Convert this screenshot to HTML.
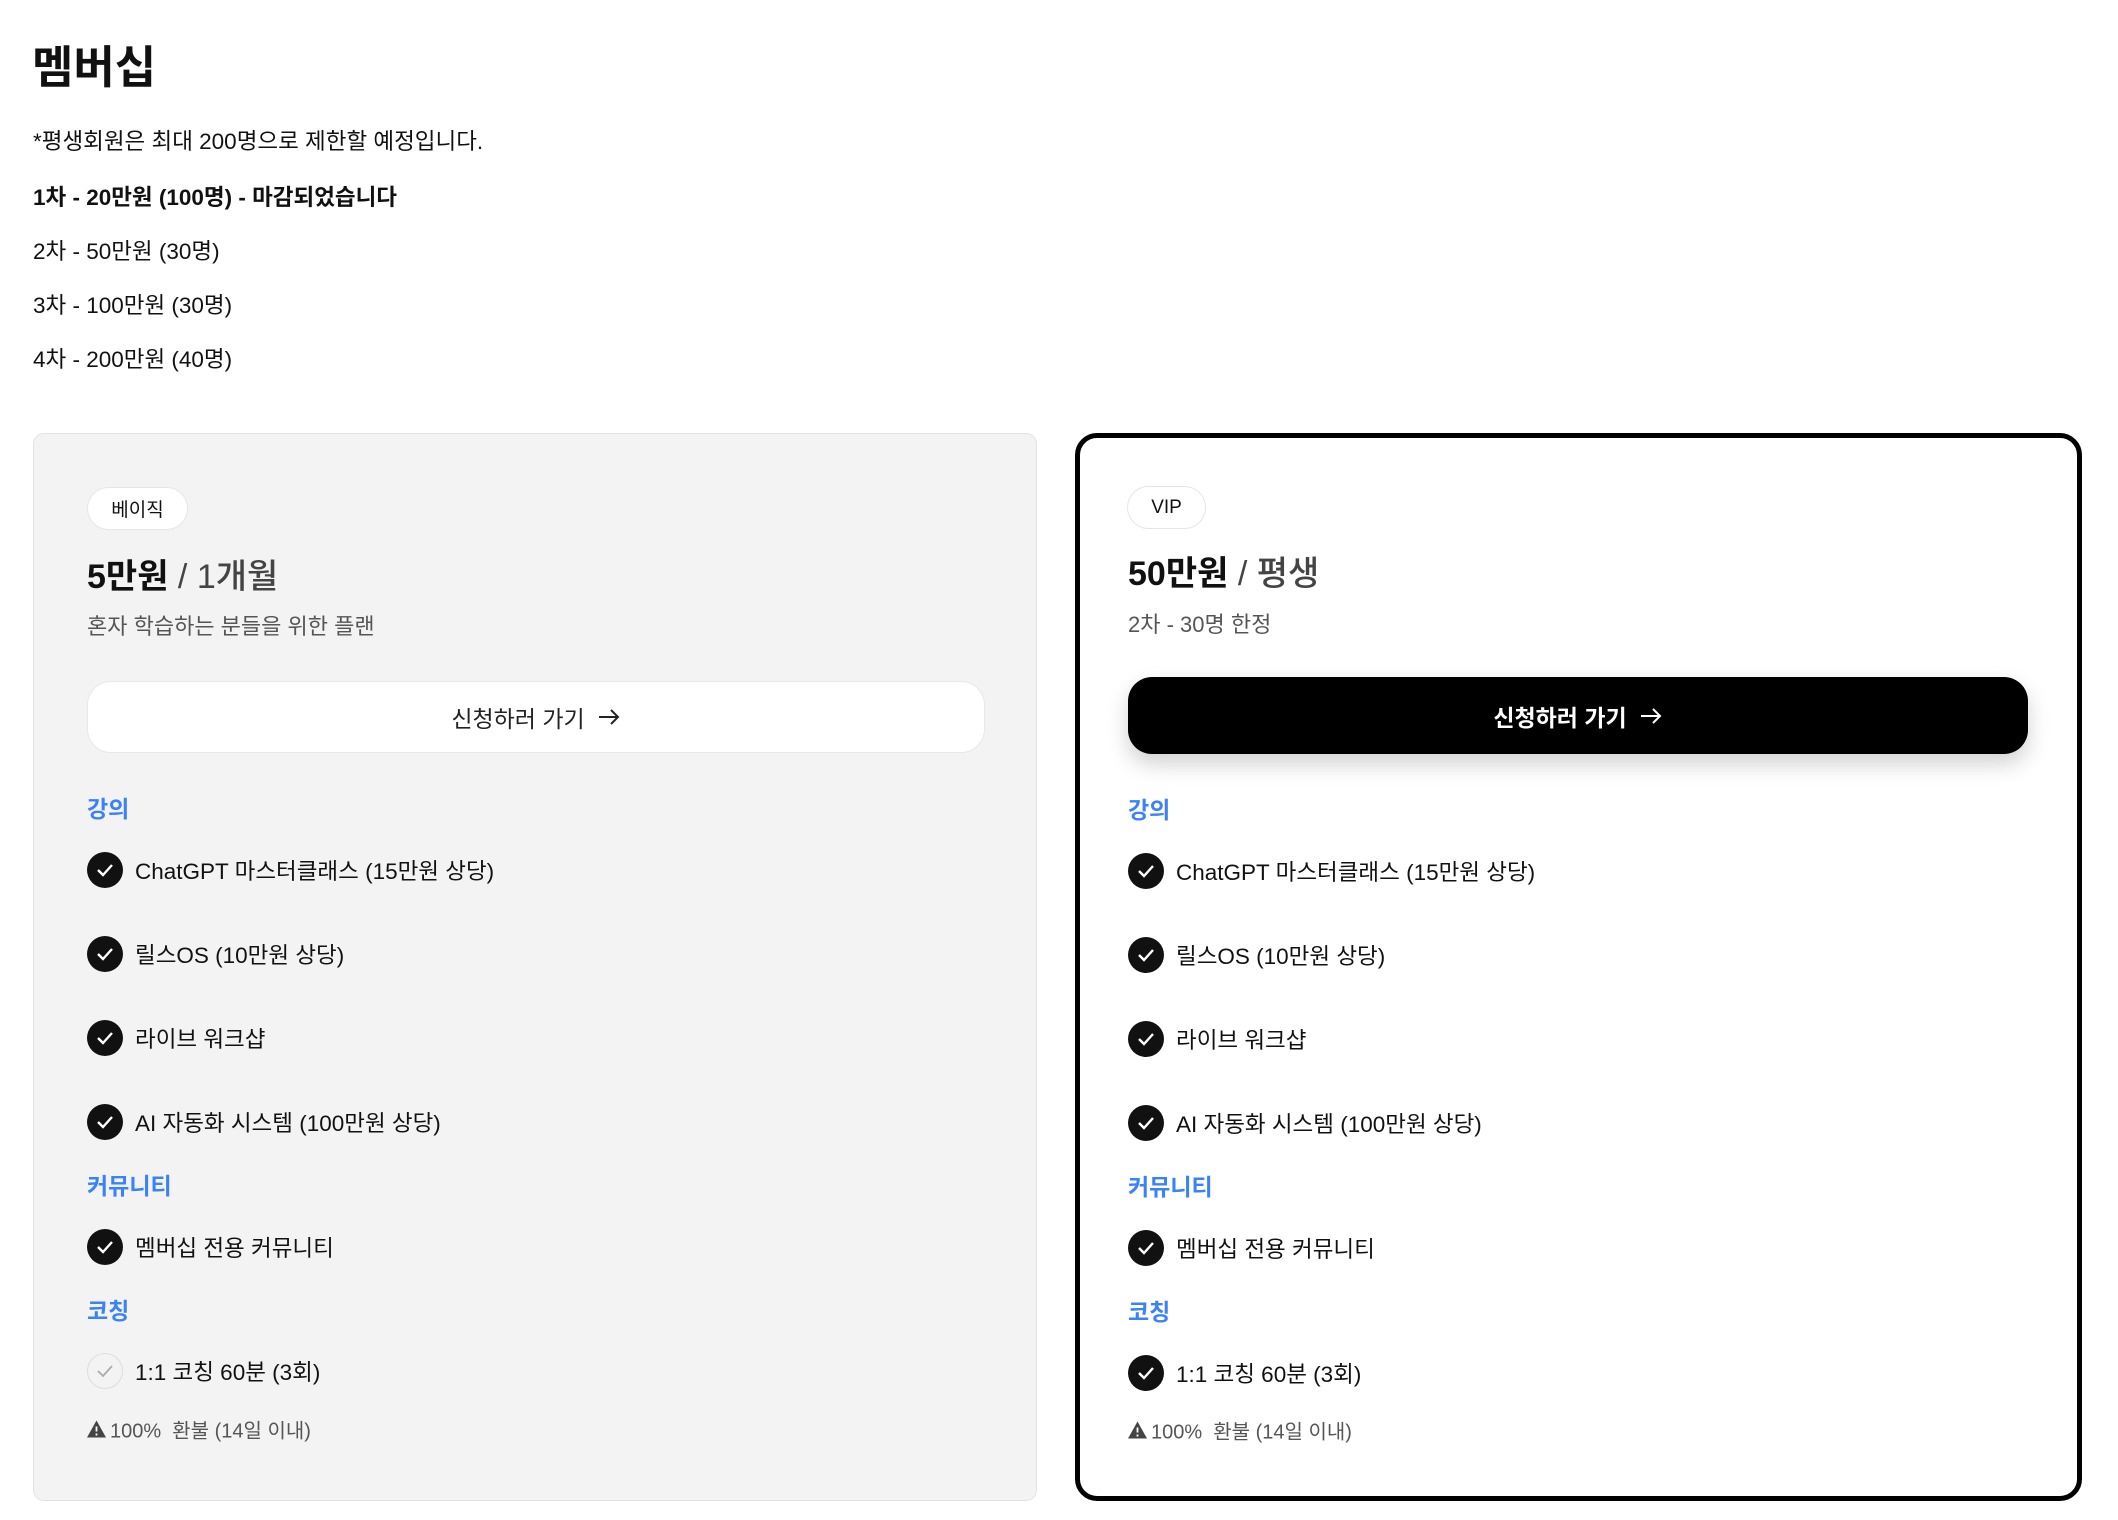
<!DOCTYPE html>
<html><head><meta charset="utf-8">
<style>
*{margin:0;padding:0;box-sizing:border-box}
body{width:2118px;height:1520px;background:#fff;font-family:"Liberation Sans","Noto Sans CJK KR",sans-serif;color:#111;position:relative;overflow:hidden}
h1{position:absolute;left:32px;top:40px;font-size:45px;font-weight:700;line-height:56px}
.ln{position:absolute;left:33px;font-size:22.5px;line-height:30px;transform:translateY(-50%);white-space:nowrap}
.card{position:absolute;top:433px;height:1068px}
.c1{left:33px;width:1004px;background:#f3f3f3;border:1.5px solid #e2e2e2;border-radius:11px}
.c2{left:1075px;width:1007px;background:#fff;border:5px solid #000;border-radius:22px}
.pill{position:absolute;top:53px;height:43px;border-radius:22px;background:#fff;border:1px solid #e6e6e6;font-size:19px;display:flex;align-items:center;justify-content:center}
.price{position:absolute;font-size:34px;font-weight:700;line-height:40px;transform:translateY(-50%);white-space:nowrap}
.price span{color:#444;font-weight:500}
.sub{position:absolute;font-size:22px;color:#555;transform:translateY(-50%);white-space:nowrap}
.btn{position:absolute;width:898px;height:72px;border-radius:24px;display:flex;align-items:center;justify-content:center;font-size:23px;gap:12px}
.sec{position:absolute;font-size:23px;font-weight:700;color:#3b82f6;transform:translateY(-50%)}
.it{position:absolute;display:flex;align-items:center;font-size:22.5px;transform:translateY(-50%);white-space:nowrap}
.ck{width:36px;height:36px;border-radius:50%;background:#111;margin-right:12px;display:flex;align-items:center;justify-content:center}
.ck.l{background:transparent;border:1.5px solid #ddd}
.rf{position:absolute;font-size:20px;color:#555;transform:translateY(-50%);display:flex;align-items:center;gap:4px;white-space:nowrap}
</style></head><body>
<h1>멤버십</h1>
<div class="ln" style="top:142px">*평생회원은 최대 200명으로 제한할 예정입니다.</div>
<div class="ln" style="top:198px;font-weight:700">1차 - 20만원 (100명) - 마감되었습니다</div>
<div class="ln" style="top:252px">2차 - 50만원 (30명)</div>
<div class="ln" style="top:306px">3차 - 100만원 (30명)</div>
<div class="ln" style="top:360px">4차 - 200만원 (40명)</div>

<div class="card c1">
  <div class="pill" style="left:53px;width:101px">베이직</div>
  <div class="price" style="left:53px;top:143px">5만원 <span>/ 1개월</span></div>
  <div class="sub" style="left:53px;top:191px">혼자 학습하는 분들을 위한 플랜</div>
  <div class="btn" style="left:53px;top:247px;background:#fff;border:1px solid #e8e8e8;color:#222">신청하러 가기 <svg width="24" height="20" viewBox="0 0 24 20"><path d="M2 10h19M14 3l7 7-7 7" fill="none" stroke="#222" stroke-width="2"/></svg></div>
  <div class="sec" style="left:53px;top:373px">강의</div>
  <div class="it" style="left:53px;top:436px"><div class="ck"><svg width="20" height="16" viewBox="0 0 20 16"><path d="M3 8l5 5 9-10" fill="none" stroke="#fff" stroke-width="2.4"/></svg></div>ChatGPT 마스터클래스 (15만원 상당)</div>
  <div class="it" style="left:53px;top:520px"><div class="ck"><svg width="20" height="16" viewBox="0 0 20 16"><path d="M3 8l5 5 9-10" fill="none" stroke="#fff" stroke-width="2.4"/></svg></div>릴스OS (10만원 상당)</div>
  <div class="it" style="left:53px;top:604px"><div class="ck"><svg width="20" height="16" viewBox="0 0 20 16"><path d="M3 8l5 5 9-10" fill="none" stroke="#fff" stroke-width="2.4"/></svg></div>라이브 워크샵</div>
  <div class="it" style="left:53px;top:688px"><div class="ck"><svg width="20" height="16" viewBox="0 0 20 16"><path d="M3 8l5 5 9-10" fill="none" stroke="#fff" stroke-width="2.4"/></svg></div>AI 자동화 시스템 (100만원 상당)</div>
  <div class="sec" style="left:53px;top:750px">커뮤니티</div>
  <div class="it" style="left:53px;top:813px"><div class="ck"><svg width="20" height="16" viewBox="0 0 20 16"><path d="M3 8l5 5 9-10" fill="none" stroke="#fff" stroke-width="2.4"/></svg></div>멤버십 전용 커뮤니티</div>
  <div class="sec" style="left:53px;top:875px">코칭</div>
  <div class="it" style="left:53px;top:937px"><div class="ck l"><svg width="20" height="16" viewBox="0 0 20 16"><path d="M3 8l5 5 9-10" fill="none" stroke="#aaa" stroke-width="1.8"/></svg></div>1:1 코칭 60분 (3회)</div>
  <div class="rf" style="left:53px;top:995px"><svg width="19" height="17" viewBox="0 0 19 17"><path d="M9.5 0L19 17H0z" fill="#444"/><path d="M9.5 6v5M9.5 13v2" stroke="#fff" stroke-width="1.8"/></svg>100%&nbsp; 환불 (14일 이내)</div>
</div>

<div class="card c2">
  <div class="pill" style="left:47px;width:79px;top:48px">VIP</div>
  <div class="price" style="left:48px;top:136px">50만원 <span>/ 평생</span></div>
  <div class="sub" style="left:48px;top:185px">2차 - 30명 한정</div>
  <div class="btn" style="left:48px;top:239px;width:900px;height:77px;background:#000;color:#fff;font-weight:700;box-shadow:0 10px 22px rgba(0,0,0,.18)">신청하러 가기 <svg width="24" height="20" viewBox="0 0 24 20"><path d="M2 10h19M14 3l7 7-7 7" fill="none" stroke="#fff" stroke-width="2"/></svg></div>
  <div class="sec" style="left:48px;top:370px">강의</div>
  <div class="it" style="left:48px;top:433px"><div class="ck"><svg width="20" height="16" viewBox="0 0 20 16"><path d="M3 8l5 5 9-10" fill="none" stroke="#fff" stroke-width="2.4"/></svg></div>ChatGPT 마스터클래스 (15만원 상당)</div>
  <div class="it" style="left:48px;top:517px"><div class="ck"><svg width="20" height="16" viewBox="0 0 20 16"><path d="M3 8l5 5 9-10" fill="none" stroke="#fff" stroke-width="2.4"/></svg></div>릴스OS (10만원 상당)</div>
  <div class="it" style="left:48px;top:601px"><div class="ck"><svg width="20" height="16" viewBox="0 0 20 16"><path d="M3 8l5 5 9-10" fill="none" stroke="#fff" stroke-width="2.4"/></svg></div>라이브 워크샵</div>
  <div class="it" style="left:48px;top:685px"><div class="ck"><svg width="20" height="16" viewBox="0 0 20 16"><path d="M3 8l5 5 9-10" fill="none" stroke="#fff" stroke-width="2.4"/></svg></div>AI 자동화 시스템 (100만원 상당)</div>
  <div class="sec" style="left:48px;top:747px">커뮤니티</div>
  <div class="it" style="left:48px;top:810px"><div class="ck"><svg width="20" height="16" viewBox="0 0 20 16"><path d="M3 8l5 5 9-10" fill="none" stroke="#fff" stroke-width="2.4"/></svg></div>멤버십 전용 커뮤니티</div>
  <div class="sec" style="left:48px;top:872px">코칭</div>
  <div class="it" style="left:48px;top:935px"><div class="ck"><svg width="20" height="16" viewBox="0 0 20 16"><path d="M3 8l5 5 9-10" fill="none" stroke="#fff" stroke-width="2.4"/></svg></div>1:1 코칭 60분 (3회)</div>
  <div class="rf" style="left:48px;top:992px"><svg width="19" height="17" viewBox="0 0 19 17"><path d="M9.5 0L19 17H0z" fill="#444"/><path d="M9.5 6v5M9.5 13v2" stroke="#fff" stroke-width="1.8"/></svg>100%&nbsp; 환불 (14일 이내)</div>
</div>
</body></html>
